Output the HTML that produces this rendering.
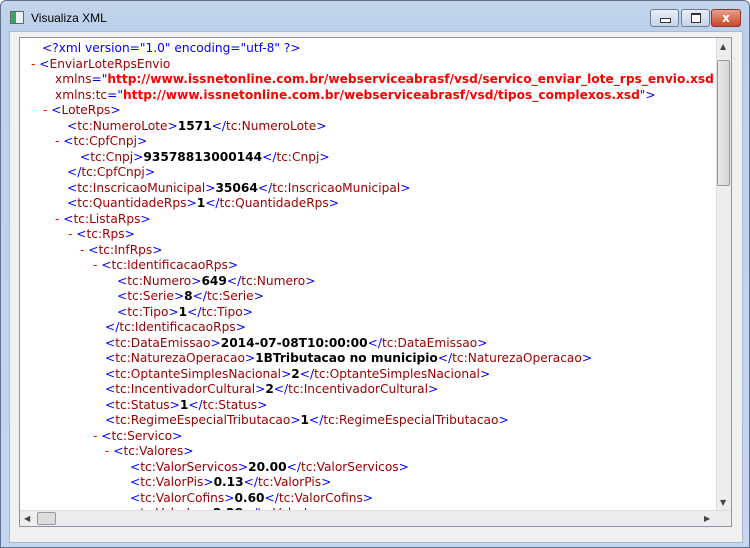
<!DOCTYPE html>
<html><head><meta charset="utf-8"><style>
body{margin:0;width:750px;height:548px;overflow:hidden;background:#fff;}
.win{position:absolute;left:0;top:0;width:748px;height:546px;border:1px solid #5d7391;border-radius:6px 6px 0 0;background:linear-gradient(#c4d5ea,#bcd0ea 30px,#c4d7ef);}
.title{position:absolute;left:30px;top:10px;font:12px "Liberation Sans",sans-serif;color:#000;}
.ico{position:absolute;left:9px;top:10px;width:12px;height:11px;border:1px solid #666;background:linear-gradient(90deg,#3a6 0 40%,#eee 40%);}
.btn{position:absolute;top:8px;height:16px;border:1px solid #6c7d98;border-radius:3px;background:linear-gradient(#e8eef7,#c6d3e6);}
.inner{position:absolute;left:8px;top:30px;width:732px;height:510px;background:#f0f0f0;border:1px solid #a9b8cc;}
.panel{position:absolute;left:19px;top:37px;width:711px;height:488px;background:#fff;border:1px solid #8a95a3;overflow:hidden;}
.l{position:absolute;white-space:pre;font:12.2px "DejaVu Sans",sans-serif;line-height:15px;}
.b{color:#0000ff}.t{color:#990000}.r{color:#ff0000;font-weight:bold}.k{font-weight:bold;color:#000}.m{color:#ff0000}
.vs{position:absolute;left:696px;top:0;width:15px;height:472px;background:#ededed;border-left:1px solid #ddd;}
.th{position:absolute;left:697px;top:22px;width:11px;height:124px;border:1px solid #999;border-radius:2px;background:linear-gradient(90deg,#e9e9e9,#d6d6d6);}
.hs{position:absolute;left:0;top:472px;width:711px;height:16px;background:#ededed;border-top:1px solid #ddd;}
.hth{position:absolute;left:17px;top:474px;width:17px;height:11px;border:1px solid #999;border-radius:2px;background:#dcdcdc;}
.ar{position:absolute;font:8px "DejaVu Sans",sans-serif;color:#444;}
</style></head><body>
<div class="win">
<div class="ico"></div><div class="title">Visualiza XML</div>
<div class="btn" style="left:649px;width:27px"><div style="position:absolute;left:9px;top:8px;width:9px;height:3px;border:1px solid #333;background:#fff"></div></div>
<div class="btn" style="left:680px;width:27px"><div style="position:absolute;left:9px;top:3px;width:8px;height:7px;border:1px solid #333;border-top-width:2px;background:#fff"></div></div>
<div class="btn" style="left:710px;width:28px;border-color:#8a3a2a;background:linear-gradient(#e9a18c,#c8452b);color:#fff;font:bold 12px 'DejaVu Sans',sans-serif;text-align:center;line-height:16px">x</div>
<div class="inner"></div>
</div>
<div class="panel">
<div class="l" style="left:22px;top:3px"><span class="b">&lt;?xml version="1.0" encoding="utf-8" ?&gt;</span></div>
<div class="l" style="left:11px;top:18.5px"><span class="m">- </span><span class="b">&lt;</span><span class="t">EnviarLoteRpsEnvio</span></div>
<div class="l" style="left:35px;top:34px"><span class="t">xmlns</span><span class="b">="</span><span class="r">http://www.issnetonline.com.br/webserviceabrasf/vsd/servico_enviar_lote_rps_envio.xsd</span></div>
<div class="l" style="left:35px;top:49.5px"><span class="t">xmlns:tc</span><span class="b">="</span><span class="r">http://www.issnetonline.com.br/webserviceabrasf/vsd/tipos_complexos.xsd</span><span class="b">"&gt;</span></div>
<div class="l" style="left:23px;top:65px"><span class="m">- </span><span class="b">&lt;</span><span class="t">LoteRps</span><span class="b">&gt;</span></div>
<div class="l" style="left:47px;top:80.5px"><span class="b">&lt;</span><span class="t">tc:NumeroLote</span><span class="b">&gt;</span><span class="k">1571</span><span class="b">&lt;/</span><span class="t">tc:NumeroLote</span><span class="b">&gt;</span></div>
<div class="l" style="left:35px;top:96px"><span class="m">- </span><span class="b">&lt;</span><span class="t">tc:CpfCnpj</span><span class="b">&gt;</span></div>
<div class="l" style="left:60px;top:111.5px"><span class="b">&lt;</span><span class="t">tc:Cnpj</span><span class="b">&gt;</span><span class="k">93578813000144</span><span class="b">&lt;/</span><span class="t">tc:Cnpj</span><span class="b">&gt;</span></div>
<div class="l" style="left:47px;top:127px"><span class="b">&lt;/</span><span class="t">tc:CpfCnpj</span><span class="b">&gt;</span></div>
<div class="l" style="left:47px;top:142.5px"><span class="b">&lt;</span><span class="t">tc:InscricaoMunicipal</span><span class="b">&gt;</span><span class="k">35064</span><span class="b">&lt;/</span><span class="t">tc:InscricaoMunicipal</span><span class="b">&gt;</span></div>
<div class="l" style="left:47px;top:158px"><span class="b">&lt;</span><span class="t">tc:QuantidadeRps</span><span class="b">&gt;</span><span class="k">1</span><span class="b">&lt;/</span><span class="t">tc:QuantidadeRps</span><span class="b">&gt;</span></div>
<div class="l" style="left:35px;top:173.5px"><span class="m">- </span><span class="b">&lt;</span><span class="t">tc:ListaRps</span><span class="b">&gt;</span></div>
<div class="l" style="left:48px;top:189px"><span class="m">- </span><span class="b">&lt;</span><span class="t">tc:Rps</span><span class="b">&gt;</span></div>
<div class="l" style="left:60px;top:204.5px"><span class="m">- </span><span class="b">&lt;</span><span class="t">tc:InfRps</span><span class="b">&gt;</span></div>
<div class="l" style="left:73px;top:220px"><span class="m">- </span><span class="b">&lt;</span><span class="t">tc:IdentificacaoRps</span><span class="b">&gt;</span></div>
<div class="l" style="left:97px;top:235.5px"><span class="b">&lt;</span><span class="t">tc:Numero</span><span class="b">&gt;</span><span class="k">649</span><span class="b">&lt;/</span><span class="t">tc:Numero</span><span class="b">&gt;</span></div>
<div class="l" style="left:97px;top:251px"><span class="b">&lt;</span><span class="t">tc:Serie</span><span class="b">&gt;</span><span class="k">8</span><span class="b">&lt;/</span><span class="t">tc:Serie</span><span class="b">&gt;</span></div>
<div class="l" style="left:97px;top:266.5px"><span class="b">&lt;</span><span class="t">tc:Tipo</span><span class="b">&gt;</span><span class="k">1</span><span class="b">&lt;/</span><span class="t">tc:Tipo</span><span class="b">&gt;</span></div>
<div class="l" style="left:85px;top:282px"><span class="b">&lt;/</span><span class="t">tc:IdentificacaoRps</span><span class="b">&gt;</span></div>
<div class="l" style="left:85px;top:297.5px"><span class="b">&lt;</span><span class="t">tc:DataEmissao</span><span class="b">&gt;</span><span class="k">2014-07-08T10:00:00</span><span class="b">&lt;/</span><span class="t">tc:DataEmissao</span><span class="b">&gt;</span></div>
<div class="l" style="left:85px;top:313px"><span class="b">&lt;</span><span class="t">tc:NaturezaOperacao</span><span class="b">&gt;</span><span class="k">1BTributacao no municipio</span><span class="b">&lt;/</span><span class="t">tc:NaturezaOperacao</span><span class="b">&gt;</span></div>
<div class="l" style="left:85px;top:328.5px"><span class="b">&lt;</span><span class="t">tc:OptanteSimplesNacional</span><span class="b">&gt;</span><span class="k">2</span><span class="b">&lt;/</span><span class="t">tc:OptanteSimplesNacional</span><span class="b">&gt;</span></div>
<div class="l" style="left:85px;top:344px"><span class="b">&lt;</span><span class="t">tc:IncentivadorCultural</span><span class="b">&gt;</span><span class="k">2</span><span class="b">&lt;/</span><span class="t">tc:IncentivadorCultural</span><span class="b">&gt;</span></div>
<div class="l" style="left:85px;top:359.5px"><span class="b">&lt;</span><span class="t">tc:Status</span><span class="b">&gt;</span><span class="k">1</span><span class="b">&lt;/</span><span class="t">tc:Status</span><span class="b">&gt;</span></div>
<div class="l" style="left:85px;top:375px"><span class="b">&lt;</span><span class="t">tc:RegimeEspecialTributacao</span><span class="b">&gt;</span><span class="k">1</span><span class="b">&lt;/</span><span class="t">tc:RegimeEspecialTributacao</span><span class="b">&gt;</span></div>
<div class="l" style="left:73px;top:390.5px"><span class="m">- </span><span class="b">&lt;</span><span class="t">tc:Servico</span><span class="b">&gt;</span></div>
<div class="l" style="left:85px;top:406px"><span class="m">- </span><span class="b">&lt;</span><span class="t">tc:Valores</span><span class="b">&gt;</span></div>
<div class="l" style="left:110px;top:421.5px"><span class="b">&lt;</span><span class="t">tc:ValorServicos</span><span class="b">&gt;</span><span class="k">20.00</span><span class="b">&lt;/</span><span class="t">tc:ValorServicos</span><span class="b">&gt;</span></div>
<div class="l" style="left:110px;top:437px"><span class="b">&lt;</span><span class="t">tc:ValorPis</span><span class="b">&gt;</span><span class="k">0.13</span><span class="b">&lt;/</span><span class="t">tc:ValorPis</span><span class="b">&gt;</span></div>
<div class="l" style="left:110px;top:452.5px"><span class="b">&lt;</span><span class="t">tc:ValorCofins</span><span class="b">&gt;</span><span class="k">0.60</span><span class="b">&lt;/</span><span class="t">tc:ValorCofins</span><span class="b">&gt;</span></div>
<div class="l" style="left:110px;top:468px"><span class="b">&lt;</span><span class="t">tc:ValorIss</span><span class="b">&gt;</span><span class="k">2.28</span><span class="b">&lt;/</span><span class="t">tc:ValorIss</span><span class="b">&gt;</span></div>
<div class="vs"></div><div class="th"></div>
<div class="ar" style="left:700px;top:4px">▲</div><div class="ar" style="left:700px;top:460px">▼</div>
<div class="hs"></div><div class="hth"></div>
<div class="ar" style="left:4px;top:476px">◀</div><div class="ar" style="left:684px;top:476px">▶</div>
</div>
</body></html>
